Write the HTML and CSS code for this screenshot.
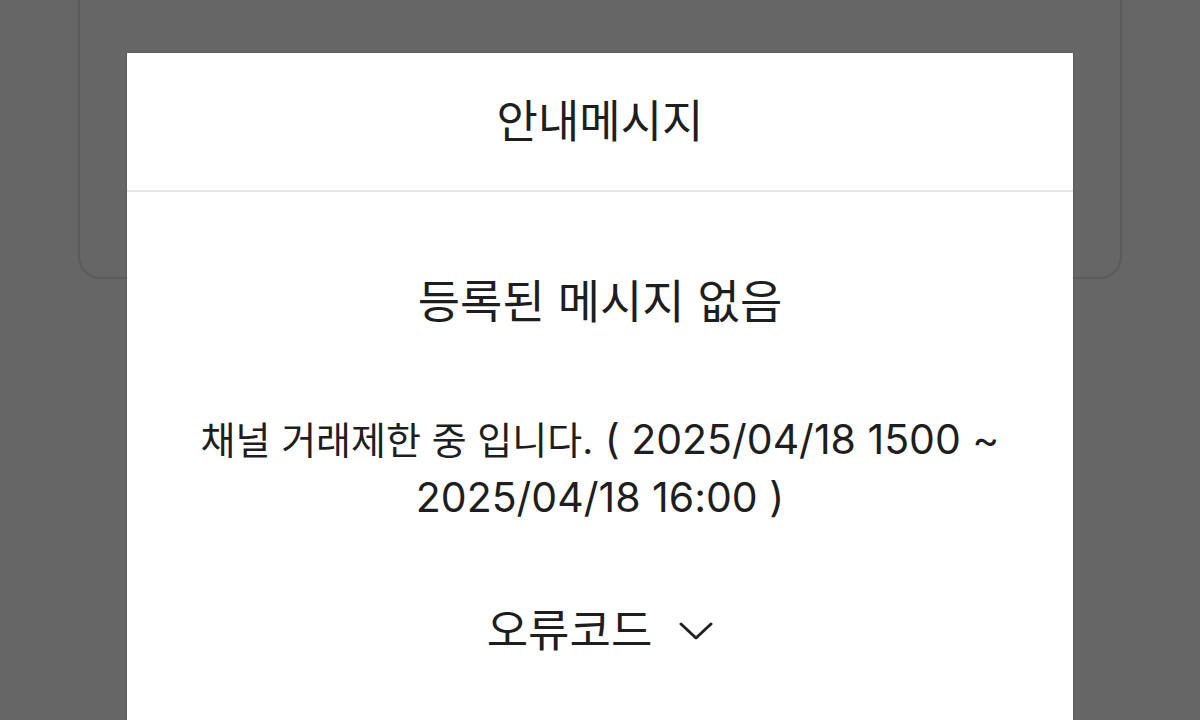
FILE: index.html
```html
<!DOCTYPE html>
<html lang="ko">
<head>
<meta charset="utf-8">
<link rel="stylesheet" href="styles.css">
</head>
<body>
<div class="page">
  <div class="bg-card"></div>
</div>
<div class="modal">
  <div class="modal-header">안내메시지</div>
  <div class="modal-body">
    <h2 class="empty-title">등록된 메시지 없음</h2>
    <p class="message">채널 거래제한 중 입니다.<span class="period"> ( 2025/04/18 1500 ~ 2025/04/18 16:00 )</span></p>
    <div class="error-code">
      <span>오류코드</span>
      <svg class="chevron" width="34" height="19" viewBox="0 0 34 19"><polyline points="2,2 17,16 32,2" fill="none" stroke="#222" stroke-width="3" stroke-linecap="round" stroke-linejoin="round"/></svg>
    </div>
  </div>
</div>
</body>
</html>
```
FILE: styles.css
```css
html, body {
  margin: 0;
  padding: 0;
  width: 1200px;
  height: 720px;
  overflow: hidden;
  background: #666666;
  font-family: "Inter", "Noto Sans CJK KR", "Noto Sans", sans-serif;
}
.page {
  padding: 0 78px;
}
.bg-card {
  margin-top: -40px;
  height: 315px;
  border: 2px solid #5b5b5b;
  border-radius: 22px;
  background: #666666;
}
.modal {
  position: absolute;
  left: 127px;
  top: 53px;
  width: 946px;
  height: 700px;
  background: #ffffff;
  box-shadow: 0 0 2px rgba(0,0,0,0.25);
  color: #1e1e1e;
}
.modal-header {
  height: 137px;
  line-height: 137px;
  text-align: center;
  font-size: 45px;
  border-bottom: 2px solid #e6e6e6;
}
.modal-body {
  display: flex;
  flex-direction: column;
  align-items: center;
  padding: 81px 50px 0;
  text-align: center;
}
.empty-title {
  margin: 0;
  font-weight: 400;
  font-size: 46px;
  line-height: 56px;
}
.message {
  margin: 82px 0 0;
  font-size: 38px;
  line-height: 57px;
}
.period {
  font-size: 41px;
}
.error-code {
  margin-top: 76px;
  display: flex;
  align-items: center;
  gap: 27px;
  font-size: 45px;
  line-height: 56px;
}
.chevron {
  display: block;
}
```
